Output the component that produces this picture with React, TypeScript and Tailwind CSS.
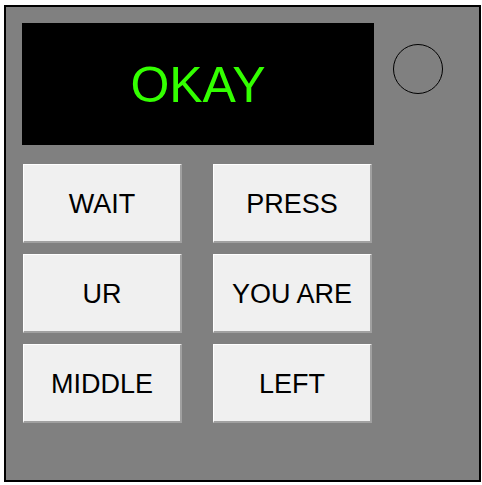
const words = ['WAIT', 'PRESS', 'UR', 'YOU ARE', 'MIDDLE', 'LEFT'];

function KeyButton({ label }: { label: string }) {
  return (
    <button className="flex h-[79px] w-[159px] items-center justify-center border-t border-l border-t-white border-l-white border-r-2 border-b-2 border-r-[#a0a0a0] border-b-[#a0a0a0] bg-[#f0f0f0] pt-[2px] text-[27px] text-black">
      {label}
    </button>
  );
}

export default function App() {
  return (
    <div
      className="pt-[5px] pl-[4px]"
      style={{ fontFamily: '"Liberation Sans", Arial, sans-serif' }}>
      <div className="h-[477px] w-[477px] border-2 border-black bg-[#808080] p-[16px]">
        <div className="flex">
          <div className="flex h-[122px] w-[352px] items-center justify-center bg-black pt-[2px] text-[50px] text-[#33ff00]">
            OKAY
          </div>
          <div className="mt-[21px] ml-[19px] h-[50px] w-[50px] rounded-full border-[1.5px] border-black" />
        </div>
        <div className="mt-[19px] ml-[1px] grid grid-cols-[159px_159px] gap-x-[31px] gap-y-[11px]">
          {words.map((w) => (
            <KeyButton key={w} label={w} />
          ))}
        </div>
      </div>
    </div>
  );
}
